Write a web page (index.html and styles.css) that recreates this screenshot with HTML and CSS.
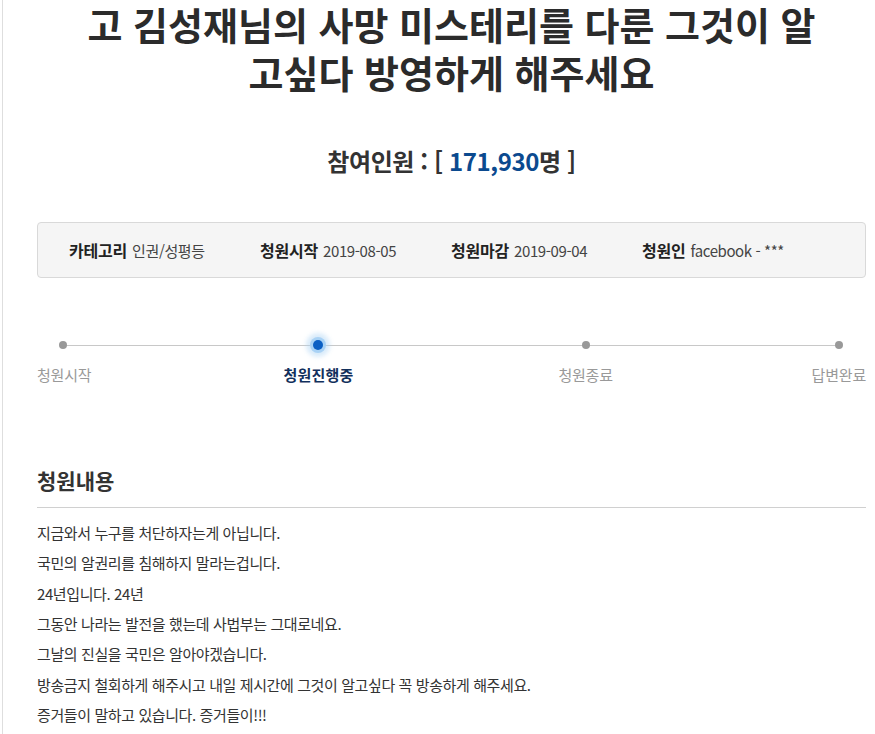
FILE: index.html
```html
<!DOCTYPE html>
<html lang="ko">
<head>
<meta charset="utf-8">
<title>청원</title>
<link rel="stylesheet" href="styles.css">
</head>
<body>
<div class="page">
  <h1 class="title"><span class="tline">고 김성재님의 사망 미스테리를 다룬 그것이 알</span><span class="tline">고싶다 방영하게 해주세요</span></h1>
  <p class="count">참여인원 : [ <span class="num">171,930</span>명 ]</p>
  <div class="info">
    <div class="item"><b>카테고리</b><span>인권/성평등</span></div>
    <div class="item"><b>청원시작</b><span>2019-08-05</span></div>
    <div class="item"><b>청원마감</b><span>2019-09-04</span></div>
    <div class="item"><b>청원인</b><span>facebook - ***</span></div>
  </div>
  <div class="progress">
    <div class="step s1"><i class="dot"></i><span class="label">청원시작</span></div>
    <div class="step s2 active"><i class="dot"></i><span class="label">청원진행중</span></div>
    <div class="step s3"><i class="dot"></i><span class="label">청원종료</span></div>
    <div class="step s4"><i class="dot"></i><span class="label">답변완료</span></div>
  </div>
  <h2 class="section">청원내용</h2>
  <div class="content">
    <p>지금와서 누구를 처단하자는게 아닙니다.</p>
    <p>국민의 알권리를 침해하지 말라는겁니다.</p>
    <p>24년입니다. 24년</p>
    <p>그동안 나라는 발전을 했는데 사법부는 그대로네요.</p>
    <p>그날의 진실을 국민은 알아야겠습니다.</p>
    <p>방송금지 철회하게 해주시고 내일 제시간에 그것이 알고싶다 꼭 방송하게 해주세요.</p>
    <p>증거들이 말하고 있습니다. 증거들이!!!</p>
  </div>
</div>
</body>
</html>
```
FILE: styles.css
```css
html, body {
  margin: 0;
  padding: 0;
  background: #fff;
}
body {
  font-family: "Noto Sans CJK KR", "Noto Sans", sans-serif;
  color: #333;
}
.page {
  margin-left: 2px;
  border-left: 1px solid #dedede;
  padding: 0 9px 0 34px;
  min-height: 734px;
  box-sizing: border-box;
}
.title {
  margin: 0;
  text-align: center;
  font-size: 38px;
  line-height: 48px;
  font-weight: 700;
  color: #2b2b2b;
  letter-spacing: 0;
}
.tline {
  display: block;
  height: 48px;
}
.count {
  margin: 49px 0 0;
  text-align: center;
  font-size: 24px;
  line-height: 32px;
  font-weight: 700;
  color: #333;
  letter-spacing: -0.4px;
}
.count .num {
  color: #0b4a8f;
}
.info {
  margin-top: 45px;
  height: 54px;
  background: #f5f5f5;
  border: 1px solid #d9d9d9;
  border-radius: 4px;
  display: flex;
  align-items: center;
  padding-left: 31px;
  font-size: 15px;
  letter-spacing: -0.4px;
}
.item {
  width: 191px;
  display: flex;
  align-items: baseline;
  gap: 5px;
  color: #444;
}
.item b {
  font-size: 16px;
  color: #222;
  font-weight: 700;
  letter-spacing: -0.2px;
}
.progress {
  position: relative;
  margin-top: 57px;
  display: flex;
}
.progress::before {
  content: "";
  position: absolute;
  left: 26px;
  right: 27px;
  top: 10px;
  height: 1px;
  background: #c8c8c8;
}
.step {
  position: relative;
  display: flex;
  flex-direction: column;
  align-items: center;
}
.s2 { margin-left: 192px; }
.s3 { margin-left: 205px; }
.s4 { margin-left: auto; }
.dot {
  width: 8px;
  height: 8px;
  margin: 6px 0;
  border-radius: 50%;
  background: #999;
}
.s1 .dot { margin-left: -3px; }
.step.active .dot {
  width: 10px;
  height: 10px;
  margin: 5px 0;
  background: #0a5fc4;
  box-shadow: 0 0 0 3px #a9d2f5, 0 0 4px 7px rgba(170, 210, 245, 0.45);
}
.label {
  margin-top: 9px;
  font-size: 15px;
  line-height: 22px;
  color: #999;
  letter-spacing: -0.2px;
}
.step.active .label {
  color: #12305c;
  font-weight: 700;
  letter-spacing: 0.2px;
}
.section {
  margin: 79px 0 0;
  padding-bottom: 12px;
  border-bottom: 1px solid #d0d0d0;
  font-size: 21px;
  line-height: 30px;
  font-weight: 700;
  color: #333;
  letter-spacing: 0;
}
.content {
  padding-top: 10px;
}
.content p {
  margin: 0;
  font-size: 15px;
  line-height: 30.33px;
  color: #333;
  letter-spacing: -0.4px;
}
```
